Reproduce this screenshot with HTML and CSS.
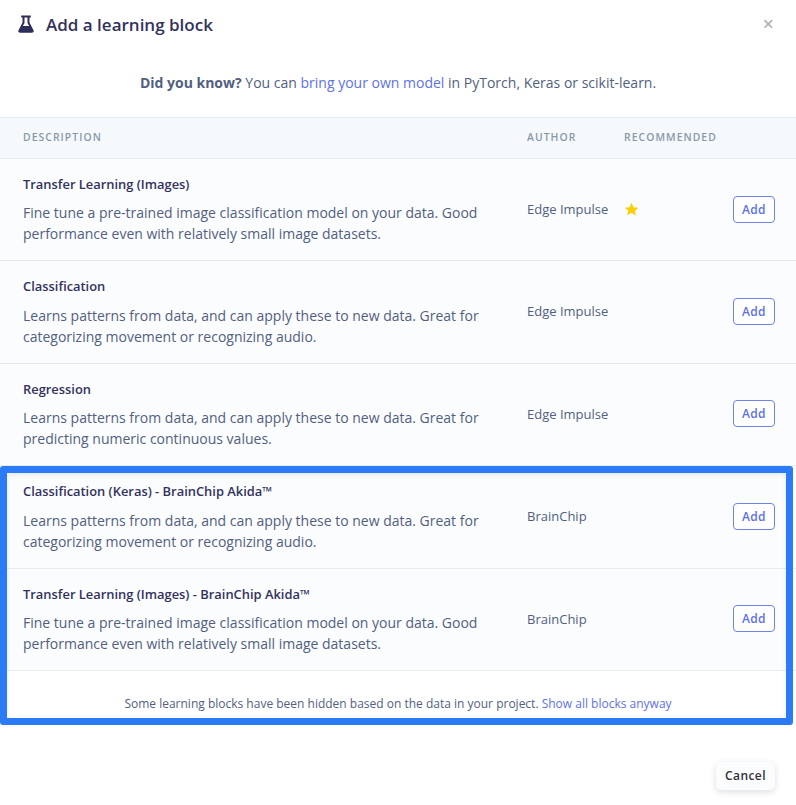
FILE: index.html
```html
<!DOCTYPE html>
<html lang="en">
<head>
    <meta charset="UTF-8">
    <meta name="viewport" content="width=device-width, initial-scale=1.0">
    <title>Add a learning block</title>
    <link rel="stylesheet" href="styles.css">
</head>
<body>
    <div class="modal">
        <header class="modal-header">
            <svg class="flask" viewBox="0 0 16 18" width="16" height="18">
                <path d="M3.2 0.6h9.6v2h-1.3v5l4 7.6c.7 1.3-.2 2.6-1.6 2.6H2.1c-1.4 0-2.3-1.3-1.6-2.6l4-7.6v-5H3.2z M6.5 2.6v5.5l-1.6 3h6.2l-1.6-3V2.6z" fill="#2d2d5a" fill-rule="evenodd"/>
            </svg>
            <h1>Add a learning block</h1>
            <span class="close">×</span>
        </header>

        <p class="hint"><strong>Did you know?</strong> You can <a href="#">bring your own model</a> in PyTorch, Keras or scikit-learn.</p>

        <table class="blocks">
            <thead>
                <tr>
                    <th class="col-desc">Description</th>
                    <th class="col-author">Author</th>
                    <th class="col-rec">Recommended</th>
                    <th class="col-add"></th>
                </tr>
            </thead>
            <tbody>
                <tr>
                    <td>
                        <div class="block-name">Transfer Learning (Images)</div>
                        <div class="block-desc">Fine tune a pre-trained image classification model on your data. Good performance even with relatively small image datasets.</div>
                    </td>
                    <td class="cell-author">Edge Impulse</td>
                    <td>
                        <svg class="star" viewBox="0 0 24 24" width="15" height="15">
                            <path d="M12 1.2l3.3 7 7.6 1-5.6 5.2 1.5 7.6L12 17.3 5.2 21l1.5-7.6L1.100 9.200l7.600-1z" fill="#fccf05"/>
                        </svg>
                    </td>
                    <td class="cell-add"><button class="btn-add">Add</button></td>
                </tr>
                <tr>
                    <td>
                        <div class="block-name">Classification</div>
                        <div class="block-desc">Learns patterns from data, and can apply these to new data. Great for categorizing movement or recognizing audio.</div>
                    </td>
                    <td class="cell-author">Edge Impulse</td>
                    <td></td>
                    <td class="cell-add"><button class="btn-add">Add</button></td>
                </tr>
                <tr>
                    <td>
                        <div class="block-name">Regression</div>
                        <div class="block-desc">Learns patterns from data, and can apply these to new data. Great for predicting numeric continuous values.</div>
                    </td>
                    <td class="cell-author">Edge Impulse</td>
                    <td></td>
                    <td class="cell-add"><button class="btn-add">Add</button></td>
                </tr>
                <tr>
                    <td>
                        <div class="block-name">Classification (Keras) - BrainChip Akida™</div>
                        <div class="block-desc">Learns patterns from data, and can apply these to new data. Great for categorizing movement or recognizing audio.</div>
                    </td>
                    <td class="cell-author">BrainChip</td>
                    <td></td>
                    <td class="cell-add"><button class="btn-add">Add</button></td>
                </tr>
                <tr>
                    <td>
                        <div class="block-name">Transfer Learning (Images) - BrainChip Akida™</div>
                        <div class="block-desc">Fine tune a pre-trained image classification model on your data. Good performance even with relatively small image datasets.</div>
                    </td>
                    <td class="cell-author">BrainChip</td>
                    <td></td>
                    <td class="cell-add"><button class="btn-add">Add</button></td>
                </tr>
            </tbody>
        </table>

        <p class="hidden-note">Some learning blocks have been hidden based on the data in your project. <a href="#">Show all blocks anyway</a></p>

        <footer class="modal-footer">
            <button class="btn-cancel">Cancel</button>
        </footer>

        <!-- annotation drawn over the screenshot -->
        <div class="highlight"></div>
    </div>
</body>
</html>
```

FILE: styles.css
```css
/* Global */
body {
    margin: 0;
    background-color: #fff;
    color: #525f7f;
    font-family: "Open Sans", "Noto Sans", Arial, sans-serif;
    font-size: 14px;
}

a {
    color: #5e72e4;
    text-decoration: none;
}

.modal {
    position: relative;
    height: 805px;
    overflow: hidden;
}

/* Header */
.modal-header {
    display: flex;
    align-items: center;
    height: 48px;
    padding: 0 22px 2px 18px;
}

.flask {
    margin-right: 12px;
}

.modal-header h1 {
    flex: 1;
    margin: 0;
    font-size: 17px;
    font-weight: 600;
    color: #32325d;
}

.close {
    color: #b5b5b5;
    font-size: 20px;
    font-weight: 600;
    line-height: 1;
}

.hint {
    margin: 0;
    height: 67px;
    padding-top: 23px;
    box-sizing: border-box;
    line-height: 20px;
    text-align: center;
}

.hint strong {
    font-weight: 700;
}

/* Table */
.blocks {
    width: 100%;
    border-collapse: collapse;
    table-layout: fixed;
}

.blocks th {
    box-sizing: border-box;
    height: 41px;
    padding: 0 0 2px;
    background-color: #f6f9fc;
    border-top: 1px solid #e9ecef;
    border-bottom: 1px solid #e9ecef;
    color: #8898aa;
    font-size: 10.4px;
    font-weight: 600;
    letter-spacing: 1.05px;
    text-align: left;
    text-transform: uppercase;
}

.col-desc {
    width: 527px;
}

.blocks th.col-desc {
    padding-left: 23px;
}

.col-author {
    width: 97px;
}

.col-rec {
    width: 109px;
}

.blocks td {
    box-sizing: border-box;
    height: 102.4px;
    padding: 0;
    background-color: #fbfcfe;
    border-bottom: 1px solid #e9ecef;
    font-size: 13px;
    vertical-align: middle;
}

.blocks td:first-child {
    padding: 0 40px 0 23px;
}

.blocks td.cell-author {
    padding-bottom: 1.2px;
}

.block-name {
    margin-bottom: 8.4px;
    color: #32325d;
    font-size: 12.9px;
    font-weight: 600;
    line-height: 19px;
}

.block-desc {
    font-size: 14px;
    line-height: 21px;
}

.star {
    display: block;
}

.cell-add {
    text-align: right;
}

.blocks td.cell-add {
    padding: 0 21px 1px 0;
}

.btn-add {
    width: 42px;
    height: 27px;
    padding: 0;
    background-color: #fff;
    border: 1px solid #6f83ec;
    border-radius: 4px;
    color: #5e72e4;
    font-family: inherit;
    font-size: 12px;
    font-weight: 600;
    letter-spacing: 0.3px;
}

/* Bottom */
.hidden-note {
    margin: 0;
    padding-top: 24px;
    font-size: 12px;
    line-height: 18px;
    text-align: center;
}

.modal-footer {
    display: flex;
    justify-content: flex-end;
    padding: 49px 21px 0 0;
}

.btn-cancel {
    width: 59px;
    height: 28px;
    padding: 0;
    background-color: #fbfcfd;
    border: none;
    border-radius: 5px;
    box-shadow: 0 2px 6px rgba(50, 50, 93, 0.16);
    color: #2f3136;
    font-family: inherit;
    font-size: 12px;
    font-weight: 600;
    letter-spacing: 0.4px;
}

.highlight {
    position: absolute;
    left: 0;
    top: 466px;
    width: 793px;
    height: 259px;
    box-sizing: border-box;
    border: 7px solid #2b7bf6;
    border-radius: 3px;
    box-shadow: inset 0 2px 5px rgba(0, 0, 0, 0.08);
    pointer-events: none;
}
```
